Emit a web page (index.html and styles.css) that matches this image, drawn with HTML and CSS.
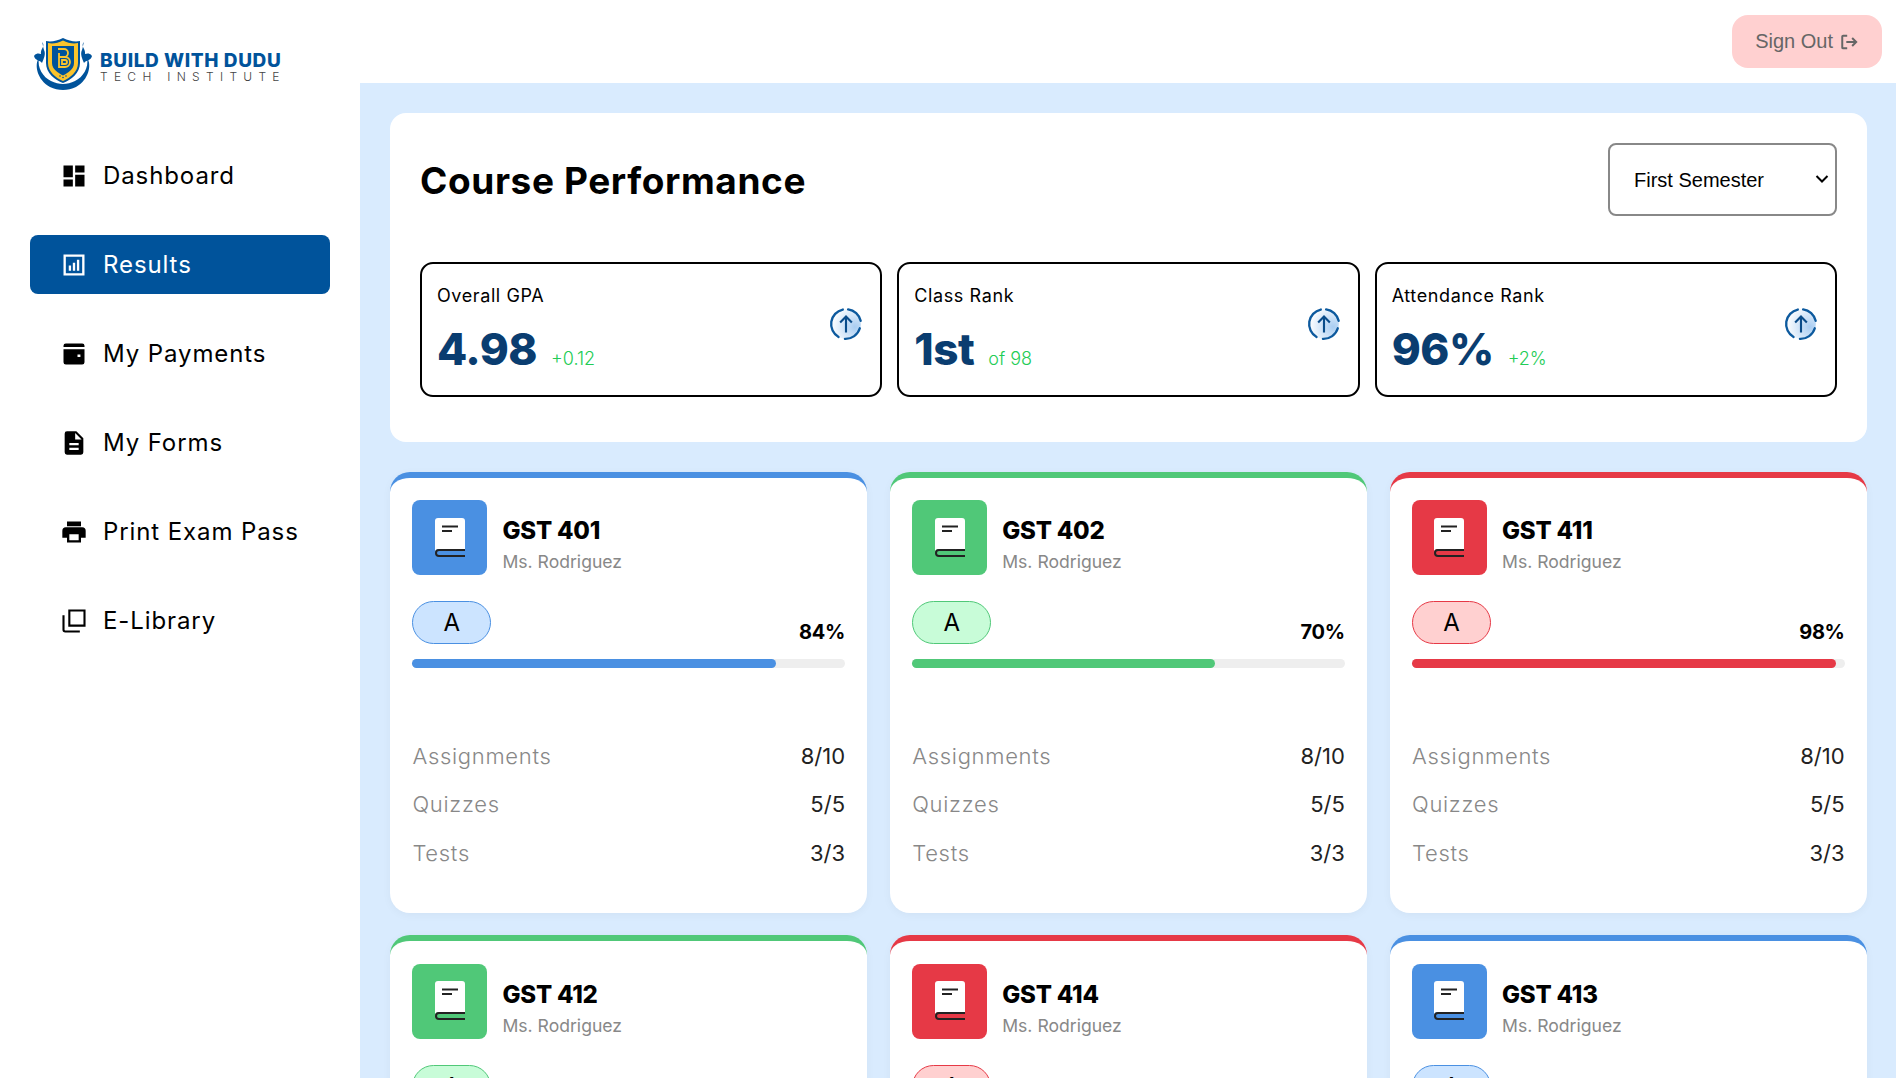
FILE: index.html
```html
<!DOCTYPE html>
<html>
<head>
  <meta charset="utf-8">
  <title>Course Performance</title>
  <link rel="stylesheet" href="styles.css">
</head>
<body>
  <svg class="defs" width="0" height="0">
    <symbol id="book" viewBox="0 0 32 40">
      <path fill="#fff" d="M4 0H28A3 3 0 0 1 31 3V31H5A4 4 0 0 0 1 33V3A3 3 0 0 1 4 0Z"/>
      <path fill="none" stroke="#222" stroke-width="2" d="M8 8.500H24M8 13H18"/>
      <path fill="none" stroke="#222" stroke-width="2" d="M31 32H5A3 3 0 0 0 5 38H31"/>
    </symbol>
    <symbol id="up" viewBox="0 0 32 32">
      <defs>
        <radialGradient id="upFill" cx="0.8" cy="0.6" r="0.8">
          <stop offset="0" stop-color="#a9cdf2"/>
          <stop offset="1" stop-color="#ffffff"/>
        </radialGradient>
      </defs>
      <circle cx="16" cy="16" r="14" fill="url(#upFill)"/>
      <path fill="none" stroke="#0d5a9e" stroke-width="2.200" stroke-linecap="round" d="M13 2.400A14 14 0 0 0 9 28.200M15 30A14 14 0 0 0 29 20M29.800 13A14 14 0 0 0 18 2.200"/>
      <path fill="none" stroke="#0a4c8a" stroke-width="2" d="M16 24V9M10.500 14.500L16 9L21.500 14.500"/>
    </symbol>
  </svg>

  <div class="app">
    <aside class="sidebar">
      <div class="logo">
        <svg class="logo-mark" viewBox="0 0 60 54">
          <path fill="#00539b" d="M6 20C1 26 4 42 17 49C25 53 35 53 43 49C56 42 59 26 54 20C56 30 50 39 42 43C34 47 26 47 18 43C10 39 4 30 6 20Z"/>
          <path fill="#00539b" d="M9 4C13 8 7 11 8 16C3 14 1 18 1 18C2 23 7 22 9 25C11 20 13 16 11 12C10 9 10 7 9 4Z"/>
          <path fill="#00539b" d="M51 4C47 8 53 11 52 16C57 14 59 18 59 18C58 23 53 22 51 25C49 20 47 16 49 12C50 9 50 7 51 4Z"/>
          <path fill="#00539b" d="M13 3C18 4 24 3 30 0C36 3 42 4 47 3V25C47 35 38 42 30 45C22 42 13 35 13 25Z"/>
          <path fill="#fcc42c" d="M15 5C20 6 25 5 30 2.500C35 5 40 6 45 5V25C45 34 37 40 30 43C23 40 15 34 15 25Z"/>
          <path fill="#00539b" d="M19 8H41V25C41 31 35 35 30 37.500C25 35 19 31 19 25Z"/>
          <path fill="none" stroke="#fcc42c" stroke-width="1.800" d="M25 11H31A4 4 0 0 1 31 19H26M26 19H32A5 5 0 0 1 32 29H26V15M29 22H32A2 2 0 0 1 32 26H29Z"/>
          <circle cx="30" cy="39.500" r="0.800" fill="#00539b"/>
          <circle cx="27" cy="38" r="0.800" fill="#00539b"/>
          <circle cx="33" cy="38" r="0.800" fill="#00539b"/>
        </svg>
        <div class="logo-text">
          <div class="logo-name">BUILD WITH DUDU</div>
          <div class="logo-sub">TECH INSTITUTE</div>
        </div>
      </div>

      <nav class="nav">
        <a class="nav-item">
          <svg viewBox="0 0 24 24"><path d="M3 3H11V13H3ZM13 3H21V9H13ZM13 11H21V21H13ZM3 15H11V21H3Z"/></svg>
          <span>Dashboard</span>
        </a>
        <a class="nav-item active">
          <svg viewBox="0 0 24 24"><path fill-rule="evenodd" d="M3 3H21V21H3ZM5 5V19H19V5ZM7.500 12.500H9.500V17H7.500ZM11 10H13V17H11ZM14.500 7.500H16.500V17H14.500Z"/></svg>
          <span>Results</span>
        </a>
        <a class="nav-item">
          <svg viewBox="0 0 24 24"><path fill-rule="evenodd" d="M5 3H19A2 2 0 0 1 21 5V6H3V5A2 2 0 0 1 5 3ZM3 8H21V19A2 2 0 0 1 19 21H5A2 2 0 0 1 3 19ZM15 12.500V14.500H17.500V12.500Z"/></svg>
          <span>My Payments</span>
        </a>
        <a class="nav-item">
          <svg viewBox="0 0 24 24"><path fill-rule="evenodd" d="M6 2H14L20 8V20A2 2 0 0 1 18 22H6A2 2 0 0 1 4 20V4A2 2 0 0 1 6 2ZM13 3.500V9H18.500ZM8 12V14H16V12ZM8 16V18H16V16Z"/></svg>
          <span>My Forms</span>
        </a>
        <a class="nav-item">
          <svg viewBox="0 0 24 24"><path fill-rule="evenodd" d="M6 3H18V7H6ZM5 8H19A3 3 0 0 1 22 11V17H18V21H6V17H2V11A3 3 0 0 1 5 8ZM8 14V19H16V14Z"/></svg>
          <span>Print Exam Pass</span>
        </a>
        <a class="nav-item">
          <svg viewBox="0 0 24 24"><path fill="none" stroke="currentColor" stroke-width="1.800" d="M8 3H21V16H8ZM3 7V19.500A1.500 1.500 0 0 0 4.500 21H17"/></svg>
          <span>E-Library</span>
        </a>
      </nav>
    </aside>

    <div class="content">
      <header class="topbar">
        <button class="sign-out">
          Sign Out
          <svg viewBox="0 0 20 20"><path fill="none" stroke="currentColor" stroke-width="2.200" d="M8 3H3.500A1 1 0 0 0 2.500 4V16A1 1 0 0 0 3.500 17H8M7 10H18M13.500 5.500L18 10L13.500 14.500"/></svg>
        </button>
      </header>

      <main class="main">
        <section class="panel">
          <div class="panel-head">
            <h1>Course Performance</h1>
            <div class="semester-wrap">
              <select class="semester">
                <option>First Semester</option>
                <option>Second Semester</option>
              </select>
              <svg class="semester-arrow" viewBox="0 0 14 10"><path fill="none" stroke="#000" stroke-width="2" d="M1.500 2L7 7.500L12.500 2"/></svg>
            </div>
          </div>
          <div class="stats">
            <div class="stat">
              <div>
                <div class="stat-label">Overall GPA</div>
                <div class="stat-line"><span class="stat-value">4.98</span><span class="stat-note">+0.12</span></div>
              </div>
              <svg class="stat-icon"><use href="#up"/></svg>
            </div>
            <div class="stat">
              <div>
                <div class="stat-label">Class Rank</div>
                <div class="stat-line"><span class="stat-value">1st</span><span class="stat-note">of 98</span></div>
              </div>
              <svg class="stat-icon"><use href="#up"/></svg>
            </div>
            <div class="stat">
              <div>
                <div class="stat-label">Attendance Rank</div>
                <div class="stat-line"><span class="stat-value">96%</span><span class="stat-note">+2%</span></div>
              </div>
              <svg class="stat-icon"><use href="#up"/></svg>
            </div>
          </div>
        </section>

        <section class="courses">
          <article class="course blue">
            <div class="course-head">
              <div class="course-icon"><svg><use href="#book"/></svg></div>
              <div class="course-text">
                <h2>GST 401</h2>
                <div class="teacher">Ms. Rodriguez</div>
              </div>
            </div>
            <div class="grade-row"><span class="grade">A</span><span class="percent">84%</span></div>
            <div class="bar"><div class="bar-fill" style="width: 84%"></div></div>
            <div class="scores">
              <div class="score"><span>Assignments</span><b>8/10</b></div>
              <div class="score"><span>Quizzes</span><b>5/5</b></div>
              <div class="score"><span>Tests</span><b>3/3</b></div>
            </div>
          </article>

          <article class="course green">
            <div class="course-head">
              <div class="course-icon"><svg><use href="#book"/></svg></div>
              <div class="course-text">
                <h2>GST 402</h2>
                <div class="teacher">Ms. Rodriguez</div>
              </div>
            </div>
            <div class="grade-row"><span class="grade">A</span><span class="percent">70%</span></div>
            <div class="bar"><div class="bar-fill" style="width: 70%"></div></div>
            <div class="scores">
              <div class="score"><span>Assignments</span><b>8/10</b></div>
              <div class="score"><span>Quizzes</span><b>5/5</b></div>
              <div class="score"><span>Tests</span><b>3/3</b></div>
            </div>
          </article>

          <article class="course red">
            <div class="course-head">
              <div class="course-icon"><svg><use href="#book"/></svg></div>
              <div class="course-text">
                <h2>GST 411</h2>
                <div class="teacher">Ms. Rodriguez</div>
              </div>
            </div>
            <div class="grade-row"><span class="grade">A</span><span class="percent">98%</span></div>
            <div class="bar"><div class="bar-fill" style="width: 98%"></div></div>
            <div class="scores">
              <div class="score"><span>Assignments</span><b>8/10</b></div>
              <div class="score"><span>Quizzes</span><b>5/5</b></div>
              <div class="score"><span>Tests</span><b>3/3</b></div>
            </div>
          </article>

          <article class="course green">
            <div class="course-head">
              <div class="course-icon"><svg><use href="#book"/></svg></div>
              <div class="course-text">
                <h2>GST 412</h2>
                <div class="teacher">Ms. Rodriguez</div>
              </div>
            </div>
            <div class="grade-row"><span class="grade">A</span><span class="percent">70%</span></div>
            <div class="bar"><div class="bar-fill" style="width: 70%"></div></div>
          </article>

          <article class="course red">
            <div class="course-head">
              <div class="course-icon"><svg><use href="#book"/></svg></div>
              <div class="course-text">
                <h2>GST 414</h2>
                <div class="teacher">Ms. Rodriguez</div>
              </div>
            </div>
            <div class="grade-row"><span class="grade">A</span><span class="percent">98%</span></div>
            <div class="bar"><div class="bar-fill" style="width: 98%"></div></div>
          </article>

          <article class="course blue">
            <div class="course-head">
              <div class="course-icon"><svg><use href="#book"/></svg></div>
              <div class="course-text">
                <h2>GST 413</h2>
                <div class="teacher">Ms. Rodriguez</div>
              </div>
            </div>
            <div class="grade-row"><span class="grade">A</span><span class="percent">84%</span></div>
            <div class="bar"><div class="bar-fill" style="width: 84%"></div></div>
          </article>
        </section>
      </main>
    </div>
  </div>
</body>
</html>
```

FILE: styles.css
```css
* {
  box-sizing: border-box;
}

body {
  margin: 0;
  height: 100vh;
  overflow: hidden;
  background: #fff;
  color: #000;
  font-family: Inter, "Noto Sans", sans-serif;
}

.defs {
  position: absolute;
}

.app {
  display: flex;
  height: 100vh;
}

/* sidebar */
.sidebar {
  width: 360px;
  flex-shrink: 0;
  padding: 38px 30px 0;
}

.logo {
  display: flex;
  align-items: center;
  gap: 7px;
  margin-left: 3px;
  height: 54px;
}

.logo-text {
  padding-top: 6px;
}

.logo-mark {
  width: 60px;
  height: 54px;
}

.logo-name {
  font-size: 19px;
  font-weight: 800;
  line-height: 18px;
  color: #00539b;
  letter-spacing: 0.6px;
  white-space: nowrap;
}

.logo-sub {
  font-size: 12px;
  font-weight: 300;
  line-height: 14px;
  color: #444;
  letter-spacing: 6.300px;
  white-space: nowrap;
}

.nav {
  display: flex;
  flex-direction: column;
  gap: 30px;
  margin-top: 54px;
}

.nav-item {
  display: flex;
  align-items: center;
  gap: 15px;
  height: 59px;
  padding-left: 30px;
  border-radius: 8px;
  font-size: 24px;
  letter-spacing: 0.9px;
  color: #000;
}

.nav-item svg {
  width: 28px;
  height: 28px;
  flex-shrink: 0;
  fill: currentColor;
}

.nav-item.active {
  background: #00539b;
  color: #fff;
}

/* top bar */
.content {
  flex: 1;
  min-width: 0;
  display: flex;
  flex-direction: column;
}

.topbar {
  height: 83px;
  flex-shrink: 0;
  display: flex;
  justify-content: flex-end;
  align-items: flex-start;
  padding: 15px 14px 0 0;
}

.sign-out {
  display: flex;
  align-items: center;
  gap: 7px;
  height: 53px;
  padding: 0 24px 0 23px;
  border: none;
  border-radius: 16px;
  background: #ffd0d0;
  color: #666;
  font-family: "Liberation Sans", sans-serif;
  font-size: 20px;
}

.sign-out svg {
  width: 18px;
  height: 18px;
}

/* main area */
.main {
  flex: 1;
  min-height: 0;
  overflow: hidden;
  padding: 30px 29px 30px 30px;
  background: #d9ebfe;
}

.panel {
  padding: 30px 30px 45px;
  background: #fff;
  border-radius: 16px;
}

.panel-head {
  display: flex;
  justify-content: space-between;
  align-items: center;
  margin-bottom: 46px;
}

.panel-head h1 {
  margin: 0;
  padding-top: 2px;
  font-size: 37px;
  font-weight: 700;
  letter-spacing: 0.6px;
}

.semester-wrap {
  position: relative;
}

.semester {
  display: block;
  width: 229px;
  height: 73px;
  padding: 0 30px 0 24px;
  appearance: none;
  border: 2px solid #888;
  border-radius: 8px;
  background: #fff;
  color: #000;
  font-family: "Liberation Sans", sans-serif;
  font-size: 20px;
}

.semester-arrow {
  position: absolute;
  right: 8px;
  top: 31px;
  width: 14px;
  height: 10px;
}

.stats {
  display: grid;
  grid-template-columns: repeat(3, 1fr);
  gap: 15px;
}

.stat {
  display: flex;
  justify-content: space-between;
  align-items: center;
  height: 135px;
  padding: 0 17px 0 15px;
  border: 2px solid #000;
  border-radius: 13px;
}

.stat-label {
  font-size: 18px;
  line-height: 24px;
  letter-spacing: 0.6px;
  margin-top: 1px;
}

.stat-line {
  display: flex;
  align-items: baseline;
  gap: 14px;
  margin-top: 12px;
  margin-bottom: -1px;
}

.stat-value {
  font-size: 44px;
  font-weight: 800;
  line-height: 58px;
  letter-spacing: -0.5px;
  color: #0a3d70;
}

.stat-note {
  font-size: 18px;
  font-weight: 300;
  color: #22cc55;
}

.stat-icon {
  width: 34px;
  height: 34px;
  margin-top: -12px;
}

/* course cards */
.courses {
  display: grid;
  grid-template-columns: repeat(3, 1fr);
  gap: 22.500px 22.400px;
  margin-top: 30px;
}

.course {
  padding: 22.400px;
  border-top: 6px solid var(--tone);
  border-radius: 20px;
  background: #fff;
  box-shadow: 0 2px 10px rgba(0, 0, 0, 0.04);
}

.course.blue {
  --tone: #4a90e2;
  --pill: #cce4ff;
}

.course.green {
  --tone: #50c878;
  --pill: #c8fcd8;
}

.course.red {
  --tone: #e63946;
  --pill: #ffd0d0;
}

.course-head {
  display: flex;
  align-items: center;
  gap: 15px;
}

.course-text {
  padding-top: 15px;
}

.course-icon {
  width: 75px;
  height: 75px;
  display: flex;
  align-items: center;
  justify-content: center;
  border-radius: 8px;
  background: var(--tone);
}

.course-icon svg {
  width: 32px;
  height: 40px;
}

.course h2 {
  margin: 0;
  font-size: 24px;
  font-weight: 800;
  line-height: 30px;
  letter-spacing: -0.2px;
}

.teacher {
  margin-top: 4px;
  font-size: 17.600px;
  line-height: 24px;
  color: #888;
}

.grade-row {
  display: flex;
  justify-content: space-between;
  align-items: flex-end;
  margin-top: 26px;
}

.grade {
  width: 79px;
  height: 43px;
  display: flex;
  align-items: center;
  justify-content: center;
  border: 1px solid var(--tone);
  border-radius: 22px;
  background: var(--pill);
  font-size: 24px;
}

.percent {
  font-size: 20px;
  font-weight: 700;
  line-height: 24px;
  letter-spacing: -0.3px;
}

.bar {
  height: 9px;
  margin-top: 15px;
  border-radius: 5px;
  background: #eee;
}

.bar-fill {
  height: 100%;
  border-radius: 5px;
  background: var(--tone);
}

.scores {
  margin-top: 63px;
  margin-bottom: 13.600px;
}

.score {
  display: flex;
  justify-content: space-between;
  align-items: center;
  height: 48.500px;
  font-size: 22px;
  color: #888;
  font-weight: 300;
  letter-spacing: 0.7px;
}

.score b {
  font-weight: 400;
  color: #222;
  letter-spacing: 0;
}
```
